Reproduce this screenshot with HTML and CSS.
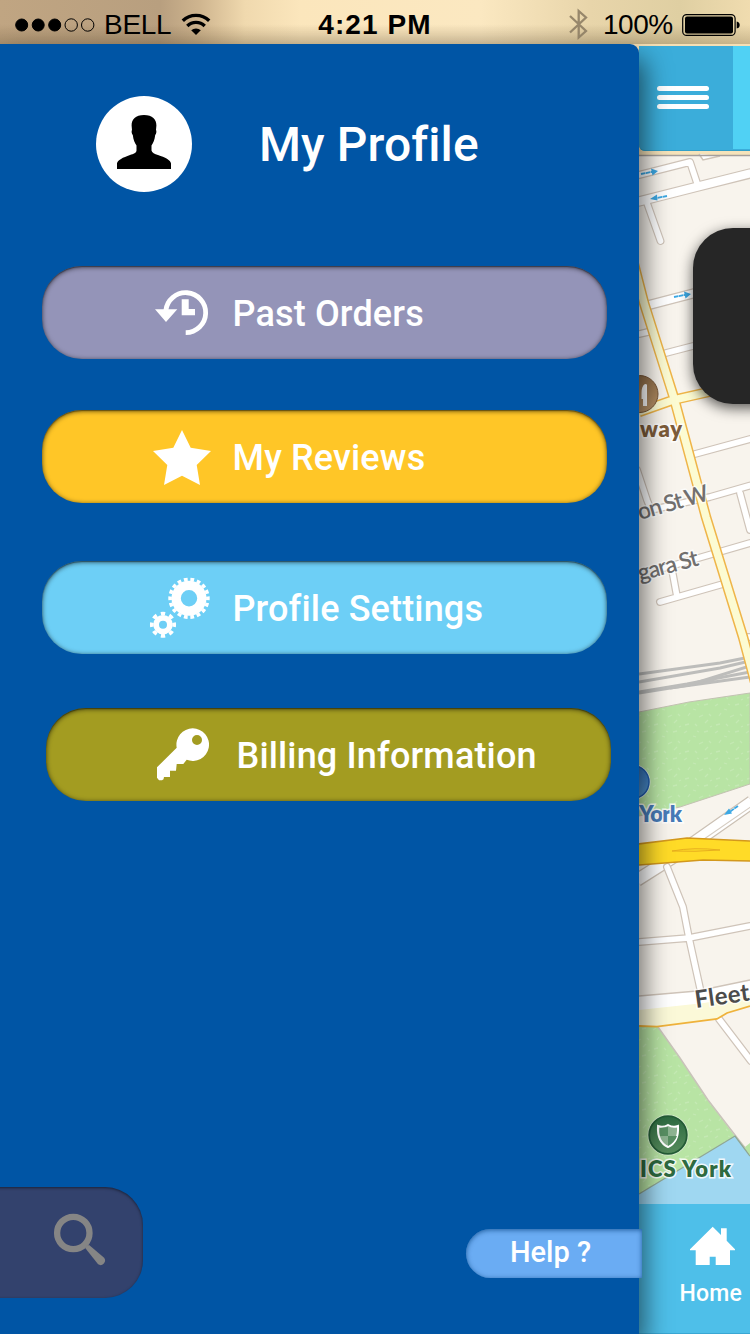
FILE: index.html
```html
<!DOCTYPE html>
<html lang="en">
<head>
<meta charset="utf-8">
<title>My Profile</title>
<link rel="stylesheet" href="styles.css">
</head>
<body>
<div class="screen">
  <header class="status">
    <div class="status-left">
      <svg class="signal" viewBox="14 14 82 20" width="82" height="20">
        <g stroke="#000"><circle cx="21.7" cy="24" r="6"/><circle cx="38.2" cy="24" r="6"/><circle cx="54.7" cy="24" r="6"/></g>
        <g fill="none" stroke="#000"><circle cx="71.2" cy="24" r="6.2"/><circle cx="87.7" cy="24" r="6.2"/></g>
      </svg>
      <span class="carrier">BELL</span>
      <svg class="wifi" viewBox="181 11 30 24" width="30" height="24">
        <g fill="none" stroke="#000" stroke-width="3.4"><path d="M182.8 19.7a19 19 0 0 1 26.4 0"/><path d="M187.3 25a12.3 12.3 0 0 1 17.4 0"/></g>
        <path d="M191.2 29.3a7 7 0 0 1 9.6 0L196 34z"/>
      </svg>
    </div>
    <span class="clock">4:21 PM</span>
    <div class="status-right">
      <svg class="bluetooth" viewBox="568 8 20 33" width="20" height="33"><path d="M570 16l16 15-7.300 6.500V11l7.300 6.500-16 15" fill="none" stroke="#97876b" stroke-width="2.300"/></svg>
      <span class="percent">100%</span>
      <svg class="battery" viewBox="682 12 60 24" width="60" height="24">
        <rect x="682.700" y="13.600" width="52.400" height="20.800" rx="4" fill="none" stroke="#000" stroke-width="1.200"/>
        <rect x="685" y="15.500" width="48" height="17" rx="2"/><path d="M736.700 20.500q3 .5 3 3.500t-3 3.500z"/>
      </svg>
    </div>
  </header>

  <main class="stage">
    <aside class="drawer">
      <div class="profile">
        <div class="avatar">
          <svg viewBox="96 96 96 96" width="96" height="96"><path d="M144 115c8.500 0 12.400 4.500 12.400 10.500l-.4 4.500c.8 1 .3 4-.8 5-.6 5-2 8-3.700 10.500v5c.5 2.500 3 3.300 6.500 4.500 7 2.400 12.700 5 13 8.500v5.500h-54v-5.500c.5-3.500 6-6 13-8.500 3.500-1.200 6.500-2 6.500-4.500v-5c-1.700-2.500-3.100-5.500-3.700-10.500-1.100-1-1.600-4-.8-5l-.4-4.500c0-6 3.900-10.500 12.400-10.500z"/></svg>
        </div>
        <h1 class="title">My Profile</h1>
      </div>
      <nav class="menu">
        <a class="item item-orders">
          <svg class="icon" viewBox="149 281 62 63"><path d="M165.800 310.500a20 20 0 1 1 19.900 22.200" fill="none" stroke="#fff" stroke-width="4.800"/><path d="M155 309.300h22.300L166 322zM181.700 299.300h7v9.700h6.300v6.300h-13.300z" fill="#fff"/></svg>
          <span class="label">Past Orders</span>
        </a>
        <a class="item item-reviews">
          <svg class="icon" viewBox="149 425 62 63"><path d="M182 430l8.700 17.700L211 451l-14.300 14 3.300 20-18-9.300-18 9.300 3.300-20L153 451l20.300-3.300z" fill="#fff"/></svg>
          <span class="label">My Reviews</span>
        </a>
        <a class="item item-settings">
          <svg class="icon" viewBox="149 576 62 63"><g fill="none" stroke="#fff"><circle cx="189" cy="598.300" r="12.850" stroke-width="9.300"/><circle cx="189" cy="598.300" r="18.900" stroke-width="3.600" pathLength="36" stroke-dasharray="1.150 .85" stroke-dashoffset=".57"/><circle cx="163" cy="624.700" r="6.850" stroke-width="5.700"/><circle cx="163" cy="624.700" r="11.200" stroke-width="3.700" pathLength="16" stroke-dasharray="1 1" stroke-dashoffset=".5"/></g></svg>
          <span class="label">Profile Settings</span>
        </a>
        <a class="item item-billing">
          <svg class="icon" viewBox="153 723 62 63"><path fill-rule="evenodd" d="M176.700 747.700a16.300 16.300 0 1 1 10 12.100l-3.400 4.200h-6.600l-.7 6.700h-6v6.300h-6l-.5 2.300-1.500 1h-3l-2-2.500v-10.500zM202 740a5 5 0 1 0-10 0 5 5 0 0 0 10 0z" fill="#fff"/></svg>
          <span class="label">Billing Information</span>
        </a>
      </nav>
      <div class="drawer-foot">
        <div class="search">
          <svg viewBox="50 1210 60 60" width="60" height="60"><circle cx="73.300" cy="1233" r="16.200" fill="none" stroke="#858585" stroke-width="6.300"/><path d="M85.600 1248.500q0-3 3.500-3.500l15 12.800a4.500 4.500 0 0 1-6 6.500z" fill="#858585"/></svg>
        </div>
        <div class="help">Help ?</div>
      </div>
    </aside>

    <section class="app">
      <div class="appbar">
        <div class="burger"><i></i><i></i><i></i></div>
        <div class="appbar-next"></div>
      </div>
      <div class="map">
        <svg class="map-art" viewBox="639 151 111 1053" width="111" height="1053">
          <defs>
            <pattern id="grass" width="31" height="27" patternUnits="userSpaceOnUse">
              <rect width="31" height="27" fill="#b8e4a4"/>
              <path d="M2 4l3-2M11 7l3 1M22 3l4-1M6 14l2-3M17 15l4-2M27 12l2 2M3 23l4-1M13 22l2 2M23 21l3-3M15 2l2 1M28 25l2-1" stroke="#c4e9b3" stroke-width="1.300"/>
            </pattern>
            <linearGradient id="brown" x2="0" y2="1"><stop stop-color="#93704a"/><stop offset="1" stop-color="#ba956b"/></linearGradient>
            <linearGradient id="pine" x2="0" y2="1"><stop stop-color="#2c6940"/><stop offset="1" stop-color="#568c5c"/></linearGradient>
            <linearGradient id="azure" x2="0" y2="1"><stop stop-color="#3371b9"/><stop offset="1" stop-color="#5295cf"/></linearGradient>
            <g id="streets">
              <path d="M639 175l51-13 8 24M639 201.500l59-15 52-13M647 203l13.500 38M639 334l9-2M666 353l27-7M695 454l55-15M637 470l10 30 4 10 59-13 40-11.500M740 493l10 37M664 568l86-25M671.700 568l5 27M660 602l63-18M667 867l16 40 6 31 11 50M639 942l50-4 61-12M719 1019l32 42M748 637h4"/>
            </g>
          </defs>
          <path fill="#f8f4ed" d="M639 151h111v1053H639z"/>
          <path fill="#f6e3ba" d="M639 151h111v4H639z"/>
          <path d="M699 154l4 6 17-4" fill="#fff" stroke="#d0c5b8" stroke-width="1.500"/>
          <path d="M639 155.500h111" stroke="#a6a09c" stroke-width="1.500"/>
          <path d="M639 712l50-10 61-9v91l-70 23-41 9z" fill="url(#grass)" stroke="#c3c2b2"/>
          <path d="M752 802l-74 52-41 26" fill="none" stroke="#cbc0b4" stroke-width="14"/>
          <path d="M752 802l-74 52-41 26" fill="none" stroke="#fff" stroke-width="11.500"/>
          <path d="M752 806l-74 51" fill="none" stroke="#d5ccc1" stroke-width="1.200"/>
          <g fill="none" stroke-linecap="round" stroke-linejoin="round">
            <use href="#streets" stroke="#cfc4b9" stroke-width="8"/>
            <path d="M639 201.500l59-15 52-13M649 305l46-12" stroke="#cfc4b9" stroke-width="10.500"/>
            <use href="#streets" stroke="#fff" stroke-width="5.600"/>
            <path d="M639 201.500l59-15 52-13M649 305l46-12" stroke="#fff" stroke-width="8"/>
          </g>
          <g fill="none" stroke="#bdbdbb" stroke-width="3">
            <path d="M639 674l81-11 30-6M639 682l81-14 30-7M639 692l48-8 63-12M670 688l80-11" />
            <path d="M639 693l50-8 61-19"/>
          </g>
          <g fill="none">
            <path d="M630 249l14 54 30 95 32 119 37 120 12 45M639 412l34-12 40-9" stroke="#efb549" stroke-width="10.500"/>
            <path d="M630 249l14 54 30 95 32 119 37 120 12 45M639 412l34-12 40-9" stroke="#fcfbd2" stroke-width="7.500"/>
          </g>
          <path d="M638 844l49-6 64 3v20l-48-1-65 5z" fill="#ffdb27" stroke="#d3981d" stroke-width="1.500"/>
          <path d="M672 851q22-4 48-1M672 851q22 1 48-1" fill="none" stroke="#e7ae1e"/>
          <path d="M639 996l58-5 53-11v26l-23 7-10 6-60 7.700-18-.7z" fill="#fff"/>
          <path d="M639 1010l65-7 46-8v11l-23 7-10 6-60 7.700-18-.7z" fill="#fbf9d8"/>
          <path d="M639 996l58-5 53-11" fill="none" stroke="#cfc4b9" stroke-width="1.500"/>
          <path d="M639 1027h19l22 31 28 42 27 36 15 16v60H639z" fill="url(#grass)"/>
          <path d="M658 1027l22 31 28 42 37 48" fill="none" stroke="#c9c3ba" stroke-width="1.500"/>
          <path d="M639 1194l96-58 15 20v48H639z" fill="#9fd7f1"/>
          <path d="M639 1194l96-58 15 20" fill="none" stroke="#90a795" stroke-width="1.300"/>
          <path d="M745 1147l5-4v12z" fill="#b8e4a4"/>
          <path d="M639 1026l18 .7 60-7.700 10-6 23-7" fill="none" stroke="#efb23b" stroke-width="1.800"/>
          <g fill="none" stroke="#3ca8e4" stroke-width="1.800">
            <path d="M641 174l13-2.500M667 196l-13 2.500M674 297l13-2.500M738 806l-10 7" stroke-dasharray="4.500 .5"/>
          </g>
          <path d="M651 168.500l7 2.500-5.500 4.500zM657 194.500l-7 4.500 7.500 1.500zM684 291.500l7 2.500-5.500 4.500zM729 808.500l-5 6.500 8-1.500z" fill="#3ca8e4"/>
          <circle cx="639.500" cy="394" r="18.500" fill="url(#brown)" stroke="#765435"/>
          <path d="M645 384q-3.500 2-3.500 9v6h1.500v7h4v-21q0-1-2-1z" fill="#fff"/>
          <circle cx="632.500" cy="782" r="18" fill="#e4f1e4"/>
          <circle cx="632.500" cy="782" r="16.500" fill="url(#azure)" stroke="#1f5cac" stroke-width="1.500"/>
          <circle cx="668" cy="1135" r="20.500" fill="#dff0d5"/>
          <circle cx="668" cy="1135" r="18.800" fill="url(#pine)" stroke="#235c35" stroke-width="1.800"/>
          <path d="M668 1125q5 3 10 1 1 16-10 21-11-5-10-21 5 2 10-1z" fill="#8db391" stroke="#fff" stroke-width="2"/>
          <path d="M668 1127v9h9q-2 6-9 10v-10h-8q-1-4 0-8z" fill="#588f63"/>
          <g class="places">
            <text x="640" y="437" textLength="42" fill="#7d5c3a">way</text>
            <text x="639" y="822" textLength="43" fill="#477bb7">York</text>
            <text x="640" y="1177" textLength="91" fill="#2e6a40">ICS York</text>
          </g>
          <g class="roads">
            <text transform="translate(640 520) rotate(-16)" textLength="73">on St W</text>
            <text transform="translate(640 581) rotate(-15)" textLength="62">gara St</text>
            <text class="major" transform="translate(696 1008) rotate(-8)">Fleet</text>
          </g>
        </svg>
        <div class="callout"></div>
      </div>
      <div class="tab">
        <svg viewBox="688 1224 48 42" width="48" height="42"><path d="M712.700 1226.700l8.300 8.300v-6.700h5.700v12.400l8.300 8.600v1h-5v14.700h-14.300v-8.300h-6v8.300h-14V1250.300H690v-1z" fill="#fff"/></svg>
        <span>Home</span>
      </div>
    </section>
  </main>
</div>
</body>
</html>
```
FILE: styles.css
```css
* { box-sizing: border-box; }

body {
  margin: 0;
  font-family: Roboto, sans-serif;
}

.screen {
  display: flex;
  flex-direction: column;
  width: 750px;
  height: 1334px;
  overflow: hidden;
  background: #f5dfb4;
}

/* Status bar */
.status {
  flex: none;
  display: grid;
  grid-template-columns: 250px 250px 250px;
  align-items: center;
  height: 44px;
  padding-top: 4px;
  font-family: "Liberation Sans", Arial, sans-serif;
  font-size: 28px;
  line-height: 40px;
  color: #000;
  background:
    linear-gradient(180deg, rgba(90, 70, 40, 0) 55%, rgba(90, 70, 40, .25) 100%),
    linear-gradient(90deg, #c0a582 0, #b89f7f 160px, #cfb58f 200px, #f0d9ae 245px, #fbe6bc 300px, #fbe8c1 480px, #e8d5aa 590px, #dfcfa2 680px, #f0dcaf 750px);
}

.status-left,
.status-right {
  display: flex;
  align-items: center;
}

.status-left { padding-left: 14px; }
.carrier { width: 68px; margin-left: 8px; padding-top: 1px; letter-spacing: -.3px; }
.wifi { margin-left: 9px; margin-top: -2px; }
.clock { padding-top: 1px; text-align: center; font-weight: bold; letter-spacing: 1.100px; }
.signal { flex: none; }
.status-right { padding-left: 68px; }
.bluetooth { flex: none; }
.percent { width: 72px; margin-left: 15px; padding-top: 1px; letter-spacing: -.5px; }
.battery { flex: none; margin-left: 7px; }

/* Stage: drawer beside the visible strip of the app */
.stage {
  flex: 1;
  display: flex;
}

.drawer {
  position: relative;
  z-index: 2;
  flex: none;
  display: flex;
  flex-direction: column;
  width: 639px;
  height: 1290px;
  padding-top: 52px;
  border-top-right-radius: 9px;
  background: #0055a5;
  box-shadow: 6px 14px 26px rgba(0, 0, 0, .55);
}

.profile {
  display: flex;
  align-items: center;
  gap: 67px;
  padding-left: 96px;
}

.avatar {
  width: 96px;
  height: 96px;
  border-radius: 50%;
  background: #fff;
}

.title {
  margin: 0;
  padding-top: 2px;
  font-size: 48px;
  font-weight: 500;
  line-height: 94px;
  letter-spacing: .1px;
  font-variant-ligatures: none;
  color: #fff;
}

.menu {
  display: flex;
  flex-direction: column;
  padding: 74px 0 0 42px;
}

.item {
  display: flex;
  align-items: center;
  width: 565px;
  height: 93px;
  padding-left: 107px;
  border-radius: 40px;
  font-size: 36px;
  font-weight: 500;
  line-height: 42px;
  letter-spacing: .15px;
  font-variant-ligatures: none;
  color: #fff;
  box-shadow: inset 0 1px 5px rgba(0, 0, 0, .65), inset 0 1px 1px rgba(0, 0, 0, .35);
}

.label { padding-top: 2px; }
.icon { flex: none; width: 62px; height: 63px; margin-right: 21.500px; }
.item-orders { background: #9494b8; }
.item-reviews { margin-top: 51px; background: #ffc627; }
.item-settings { margin-top: 58px; background: #6dcff6; }
.item-billing { margin: 54px 0 0 4px; background: #a39c21; }

.drawer-foot {
  display: flex;
  align-items: flex-start;
  justify-content: space-between;
  margin-top: 386px;
  margin-right: -3px;
}

/* The left edge runs off the screen so only the outer side shows its shadow */
.search {
  width: 153px;
  height: 111px;
  margin-left: -10px;
  padding: 23px 0 0 60px;
  border-radius: 0 38px 38px 0;
  background: #33426d;
  box-shadow: inset 0 1px 3px rgba(0, 0, 0, .5);
}

.help {
  width: 176px;
  height: 49px;
  margin-top: 42px;
  padding-left: 44px;
  border-radius: 25px 0 0 25px;
  font-size: 29px;
  font-weight: 500;
  line-height: 46px;
  color: #fff;
  background: #6aacf3;
  box-shadow: inset 0 1px 5px rgba(0, 60, 120, .7);
}

/* App strip */
.app {
  display: flex;
  flex-direction: column;
  width: 111px;
  padding-top: 2px;
}

.appbar {
  flex: none;
  display: flex;
  justify-content: space-between;
  height: 105px;
  border-bottom-left-radius: 6px;
  background: #3badda;
  box-shadow: inset 0 -1px 0 #32a0c9;
}

.burger {
  display: flex;
  flex-direction: column;
  gap: 4.300px;
  padding: 39.500px 0 0 18px;
}

.burger i { width: 52px; height: 5px; border-radius: 3px; background: #fff; }
.appbar-next { width: 17px; height: 103px; background: #50d1f4; }

.map {
  position: relative;
  flex: none;
  height: 1053px;
  overflow: hidden;
}

.map-art { display: block; }

.places text {
  font: 800 22px Lato, sans-serif;
  stroke: rgba(255, 255, 255, .85);
  stroke-width: 3px;
  paint-order: stroke;
}

.roads text {
  font: 600 23px Lato, sans-serif;
  fill: #72706f;
  stroke: rgba(255, 255, 255, .7);
  stroke-width: 3px;
  paint-order: stroke;
}

.roads .major { font-size: 24px; font-weight: 700; letter-spacing: .3px; fill: #4b4b4b; }

/* Callout card floating over the map */
.callout {
  position: absolute;
  top: 77px;
  left: 54px;
  width: 120px;
  height: 176px;
  border-radius: 40px;
  background: #262626;
  box-shadow: 0 4px 14px rgba(0, 0, 0, .65);
}

.tab {
  flex: none;
  display: flex;
  flex-direction: column;
  height: 130px;
  padding: 20px 0 0 40.500px;
  font-size: 23px;
  font-weight: 500;
  line-height: 28px;
  letter-spacing: .2px;
  color: #fff;
  background: #4ebfe9;
  box-shadow: inset 0 -1px 0 #3aa7d4;
}

.tab svg { margin-left: 8.500px; margin-bottom: 14px; }
```
